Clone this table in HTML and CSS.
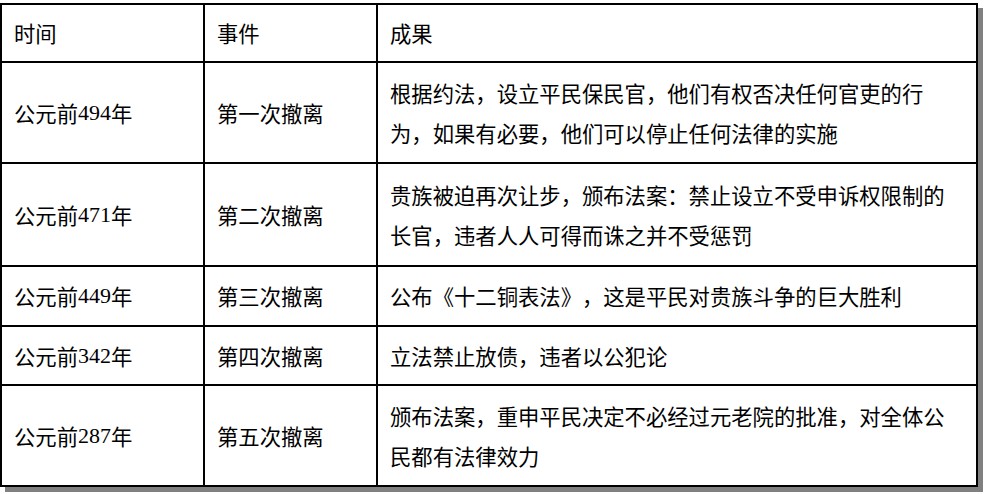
FILE: index.html
```html
<!DOCTYPE html>
<html>
<head>
<meta charset="utf-8">
<title>平民撤离运动</title>
<link rel="stylesheet" href="styles.css">
</head>
<body>
<div class="frame">
<div class="table">
  <div class="cell">时间</div>
  <div class="cell">事件</div>
  <div class="cell">成果</div>

  <div class="cell">公元前<span class="num">494</span>年</div>
  <div class="cell">第一次撤离</div>
  <div class="cell">根据约法，设立平民保民官，他们有权否决任何官吏的行<br>为，如果有必要，他们可以停止任何法律的实施</div>

  <div class="cell">公元前<span class="num">471</span>年</div>
  <div class="cell">第二次撤离</div>
  <div class="cell">贵族被迫再次让步，颁布法案：禁止设立不受申诉权限制的<br>长官，违者人人可得而诛之并不受惩罚</div>

  <div class="cell">公元前<span class="num">449</span>年</div>
  <div class="cell">第三次撤离</div>
  <div class="cell">公布《十二铜表法》，这是平民对贵族斗争的巨大胜利</div>

  <div class="cell">公元前<span class="num">342</span>年</div>
  <div class="cell">第四次撤离</div>
  <div class="cell">立法禁止放债，违者以公犯论</div>

  <div class="cell">公元前<span class="num">287</span>年</div>
  <div class="cell">第五次撤离</div>
  <div class="cell">颁布法案，重申平民决定不必经过元老院的批准，对全体公<br>民都有法律效力</div>
</div>
</div>
</body>
</html>
```

FILE: styles.css
```css
html, body {
  margin: 0;
  padding: 0;
  background: #fff;
}
body {
  padding-top: 3px;
}
.frame {
  width: 978px;
  padding: 0 5px 5px 0;
  background: linear-gradient(#808080, #808080) 5px 5px / 978px calc(100% - 5px) no-repeat;
}
.table {
  display: grid;
  grid-template-columns: 201px 171px 598px;
  grid-template-rows: 56px 99px 101px 58px 57px 99px;
  gap: 2px;
  padding: 2px;
  width: 974px;
  background: #000;
  font-family: "Noto Sans CJK SC", sans-serif;
  font-size: 21.33px;
  line-height: 40px;
  color: #000;
  text-spacing-trim: space-all;
}
.cell {
  background: #fff;
  padding: 0 10px 0 12px;
  display: flex;
  align-items: center;
  white-space: nowrap;
}
.cell br {
  display: block;
}
.num {
  font-family: "Times New Roman", "Liberation Serif", "Tinos", "DejaVu Serif", serif;
  font-size: 22px;
}
```
